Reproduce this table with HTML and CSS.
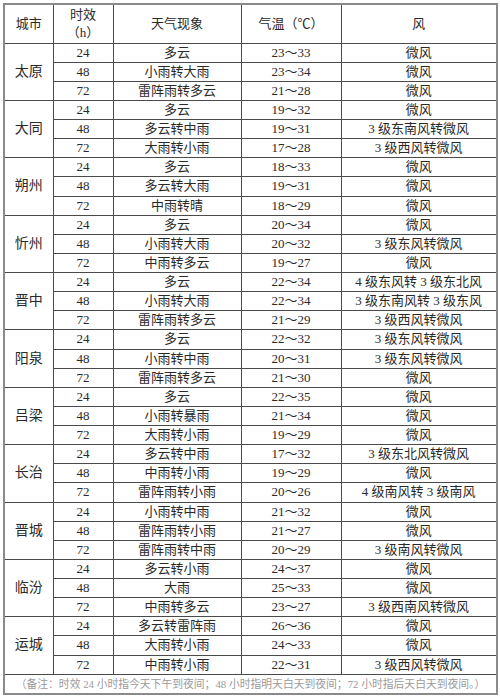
FILE: index.html
```html
<!DOCTYPE html>
<html lang="zh-CN">
<head>
<meta charset="utf-8">
<title>山西天气预报</title>
<link rel="stylesheet" href="styles.css">
</head>
<body>
<table class="wx">
<colgroup>
<col class="c-city"><col class="c-hour"><col class="c-sky"><col class="c-temp"><col class="c-wind">
</colgroup>
<thead>
<tr class="head"><th>城市</th><th>时效<br>（h）</th><th>天气现象</th><th>气温（℃）</th><th>风</th></tr>
</thead>
<tbody>
<tr><td class="city" rowspan="3">太原</td><td>24</td><td>多云</td><td>23～33</td><td>微风</td></tr>
<tr><td>48</td><td>小雨转大雨</td><td>23～34</td><td>微风</td></tr>
<tr><td>72</td><td>雷阵雨转多云</td><td>21～28</td><td>微风</td></tr>

<tr><td class="city" rowspan="3">大同</td><td>24</td><td>多云</td><td>19～32</td><td>微风</td></tr>
<tr><td>48</td><td>多云转中雨</td><td>19～31</td><td>3 级东南风转微风</td></tr>
<tr><td>72</td><td>大雨转小雨</td><td>17～28</td><td>3 级西风转微风</td></tr>

<tr><td class="city" rowspan="3">朔州</td><td>24</td><td>多云</td><td>18～33</td><td>微风</td></tr>
<tr><td>48</td><td>多云转大雨</td><td>19～31</td><td>微风</td></tr>
<tr><td>72</td><td>中雨转晴</td><td>18～29</td><td>微风</td></tr>

<tr><td class="city" rowspan="3">忻州</td><td>24</td><td>多云</td><td>20～34</td><td>微风</td></tr>
<tr><td>48</td><td>小雨转大雨</td><td>20～32</td><td>3 级东风转微风</td></tr>
<tr><td>72</td><td>中雨转多云</td><td>19～27</td><td>微风</td></tr>

<tr><td class="city" rowspan="3">晋中</td><td>24</td><td>多云</td><td>22～34</td><td>4 级东风转 3 级东北风</td></tr>
<tr><td>48</td><td>小雨转大雨</td><td>22～34</td><td>3 级东南风转 3 级东风</td></tr>
<tr><td>72</td><td>雷阵雨转多云</td><td>21～29</td><td>3 级西风转微风</td></tr>

<tr><td class="city" rowspan="3">阳泉</td><td>24</td><td>多云</td><td>22～32</td><td>3 级东风转微风</td></tr>
<tr><td>48</td><td>小雨转中雨</td><td>20～31</td><td>3 级东风转微风</td></tr>
<tr><td>72</td><td>雷阵雨转多云</td><td>21～30</td><td>微风</td></tr>

<tr><td class="city" rowspan="3">吕梁</td><td>24</td><td>多云</td><td>22～35</td><td>微风</td></tr>
<tr><td>48</td><td>小雨转暴雨</td><td>21～34</td><td>微风</td></tr>
<tr><td>72</td><td>大雨转小雨</td><td>19～29</td><td>微风</td></tr>

<tr><td class="city" rowspan="3">长治</td><td>24</td><td>多云转中雨</td><td>17～32</td><td>3 级东北风转微风</td></tr>
<tr><td>48</td><td>中雨转小雨</td><td>19～29</td><td>微风</td></tr>
<tr><td>72</td><td>雷阵雨转小雨</td><td>20～26</td><td>4 级南风转 3 级南风</td></tr>

<tr><td class="city" rowspan="3">晋城</td><td>24</td><td>小雨转中雨</td><td>21～32</td><td>微风</td></tr>
<tr><td>48</td><td>雷阵雨转小雨</td><td>21～27</td><td>微风</td></tr>
<tr><td>72</td><td>雷阵雨转中雨</td><td>20～29</td><td>3 级南风转微风</td></tr>

<tr><td class="city" rowspan="3">临汾</td><td>24</td><td>多云转小雨</td><td>24～37</td><td>微风</td></tr>
<tr><td>48</td><td>大雨</td><td>25～33</td><td>微风</td></tr>
<tr><td>72</td><td>中雨转多云</td><td>23～27</td><td>3 级西南风转微风</td></tr>

<tr><td class="city" rowspan="3">运城</td><td>24</td><td>多云转雷阵雨</td><td>26～36</td><td>微风</td></tr>
<tr><td>48</td><td>大雨转小雨</td><td>24～33</td><td>微风</td></tr>
<tr><td>72</td><td>中雨转小雨</td><td>22～31</td><td>3 级西风转微风</td></tr>

<tr class="note"><td colspan="5">（备注：时效 24 小时指今天下午到夜间；48 小时指明天白天到夜间；72 小时指后天白天到夜间。）</td></tr>
</tbody>
</table>
</body>
</html>
```

FILE: styles.css
```css
html, body {
  margin: 0;
  padding: 0;
  background: #ffffff;
}

body {
  padding: 3px 0 0 3px;
}

.wx {
  border-collapse: collapse;
  table-layout: fixed;
  width: 493px;
  border: 2px solid #8a8a8a;
  font-family: "Liberation Serif", "Noto Sans CJK SC", serif;
  font-size: 13px;
  font-weight: 400;
  color: #2a2a2a;
}

.c-city { width: 49px; }
.c-hour { width: 60px; }
.c-sky { width: 128px; }
.c-temp { width: 100px; }
.c-wind { width: 156px; }

.wx th,
.wx td {
  border: 1px solid #4a4a4a;
  padding: 0;
  text-align: center;
  vertical-align: middle;
  line-height: 18px;
  white-space: nowrap;
  font-weight: 400;
}

.head {
  height: 39px;
}

.wx tbody tr {
  height: 19.13px;
}

.wx td.city {
  font-size: 14px;
}

.wx tr.note {
  height: 19px;
}

.note td {
  color: #9a9a9a;
  font-size: 10.8px;
  overflow: hidden;
}
```
